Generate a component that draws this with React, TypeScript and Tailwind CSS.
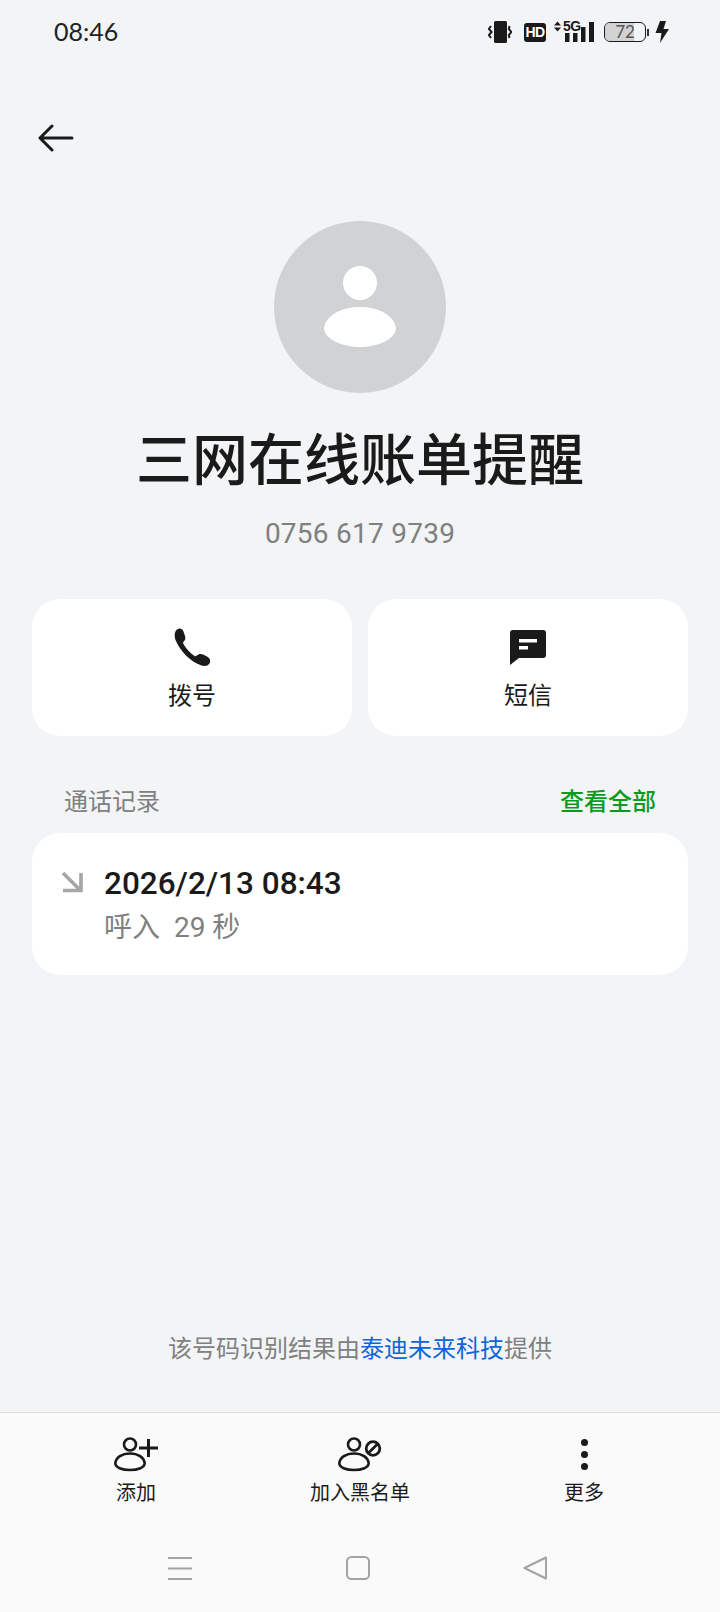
import React from 'react';

const cjk = 'font-["Roboto","Noto_Sans_CJK_SC",sans-serif]';

const StatusIcons = () => (
  <div className="flex items-center">
    {/* vibrate */}
    <svg width="24" height="24" viewBox="0 0 24 24" className="text-[#1a1a1a] mr-[12px]">
      <rect x="6" y="1" width="13" height="22" rx="1.5" fill="currentColor" />
      <path d="M3 6 L0.8 9 L3.6 12 L0.8 15 L3 18" stroke="currentColor" strokeWidth="2" fill="none" />
      <path d="M21.5 6 L20.8 9 L23.4 12 L20.8 15 L21.5 18" stroke="currentColor" strokeWidth="2" fill="none" />
    </svg>
    <div className="w-[22px] h-[19px] rounded-[3px] bg-[#1a1a1a] text-white text-[14px] leading-[19px] font-bold text-center tracking-[-0.5px] font-['Liberation_Sans',sans-serif] mr-[8px]">HD</div>
    {/* signal with 5G */}
    <div className="relative w-[41px] h-[24px] mr-[9px]">
      <svg width="41" height="24" viewBox="0 0 41 24" className="absolute left-0 top-0 text-[#1a1a1a]">
        <path d="M0 5.5 L3.5 1.5 L7 5.5 Z M0 7.5 L7 7.5 L3.5 11.5 Z" fill="currentColor" />
        <rect x="11" y="13" width="4.5" height="9" fill="currentColor" />
        <rect x="19" y="13" width="4.5" height="9" fill="currentColor" />
        <rect x="27" y="7" width="4.5" height="15" fill="currentColor" />
        <rect x="35" y="2" width="5" height="20" fill="currentColor" />
      </svg>
      <span className="absolute left-[9px] top-[0px] text-[14px] leading-[13px] font-bold text-[#1a1a1a] tracking-[-0.5px] font-['Liberation_Sans',sans-serif]">5G</span>
    </div>
    {/* battery */}
    <div className="relative w-[42px] h-[20px] rounded-[6px] border-[1.5px] border-[#1a1a1a] overflow-hidden">
      <div className="absolute left-0 top-0 h-full w-[29px] bg-[#d2d2d2]" />
      <span className="absolute inset-0 text-center text-[17px] leading-[17px] text-[#555] font-['Lato',sans-serif]">72</span>
    </div>
    <div className="w-[2px] h-[7px] bg-[#333] ml-[1px] mr-[6px]" />
    <svg width="14" height="22" viewBox="0 0 14 22" className="text-[#1a1a1a]">
      <path d="M5 0 H11 L8.5 8 H14 L5 22 L6.5 12 H0.5 Z" fill="currentColor" />
    </svg>
  </div>
);

const PersonOutline = () => (
  <>
    <circle cx="16" cy="7.5" r="6" fill="none" stroke="#1a1a1a" strokeWidth="2.6" />
    <path d="M1.3 26 C2 20.5 8 16.5 16 16.5 C24 16.5 30 20.5 30.7 26 C30.7 30.5 24 33 16 33 C8 33 1.3 30.5 1.3 26 Z" fill="none" stroke="#1a1a1a" strokeWidth="2.6" />
  </>
);

const ToolbarItem = ({ icon, label }: { icon: React.ReactNode; label: string }) => (
  <div className="flex flex-col items-center w-[160px]">
    <div className="h-[38px] flex items-center justify-center">{icon}</div>
    <span className="mt-[7px] text-[20px] leading-[26px] text-[#1a1a1a]">{label}</span>
  </div>
);

export default function App() {
  return (
    <div className={`w-[720px] h-[1612px] bg-[#f2f4f6] flex flex-col ${cjk}`}>
      {/* Status bar */}
      <div className="h-[64px] flex items-center justify-between pl-[54px] pr-[51px]">
        <span className="text-[25px] text-[#222] font-['Lato',sans-serif]">08:46</span>
        <StatusIcons />
      </div>

      {/* Back */}
      <div className="pl-[38px] pt-[60px] h-[157px]">
        <svg width="36" height="28" viewBox="0 0 36 28" fill="none" stroke="#1a1a1a" strokeWidth="3" strokeLinecap="round" strokeLinejoin="round">
          <path d="M2 14 H34 M14 2 L2 14 L14 26" />
        </svg>
      </div>

      {/* Contact */}
      <div className="flex flex-col items-center">
        <div className="w-[172px] h-[172px] rounded-full bg-[#d1d2d4] flex items-center justify-center">
          <svg width="72" height="82" viewBox="0 0 72 82" fill="#fff">
            <circle cx="36" cy="17" r="17" />
            <path d="M0 62 C2 49 18 41 36 41 C54 41 70 49 72 62 C72 73 54 81 36 81 C18 81 0 73 0 62 Z" />
          </svg>
        </div>
        <h1 className="mt-[35px] text-[56px] leading-[66px] font-medium text-[#1a1a1a]">三网在线账单提醒</h1>
        <div className="mt-[22px] text-[28px] leading-[36px] tracking-[0.25px] text-[#808080]">0756 617 9739</div>
      </div>

      {/* Actions */}
      <div className="mt-[47px] px-[32px] flex gap-[16px]">
        <div className="flex-1 h-[137px] bg-white rounded-[28px] flex flex-col items-center pt-[29px]">
          <svg width="38" height="38" viewBox="0 0 38 38">
            <path d="M4 1.5 C6.5 -0.5 9.5 0.5 10.5 3.5 L12 8 C12.8 10.5 12.3 12 10.3 14 C10 14.5 10 15 10.3 15.8 C13 20.5 17 25 21.5 28 C22.3 28.4 23 28.3 23.5 27.8 C25.5 26 27.5 25.5 30 26.5 L34 28.5 C37 30 38 33 36.5 35.5 C35 38 31.5 38.5 28.5 37.5 C17 33.5 7 23 2.5 12 C1 8 1.5 3.5 4 1.5 Z" fill="#1a1a1a" />
          </svg>
          <span className="mt-[14px] text-[24px] leading-[32px] text-[#1a1a1a]">拨号</span>
        </div>
        <div className="flex-1 h-[137px] bg-white rounded-[28px] flex flex-col items-center pt-[29px]">
          <svg width="38" height="38" viewBox="0 0 38 38">
            <path d="M4 2 H34 A3 3 0 0 1 37 5 V27 A3 3 0 0 1 34 30 H10 L1 37 V5 A3 3 0 0 1 4 2 Z" fill="#1a1a1a" />
            <rect x="10" y="11" width="18" height="3.5" fill="#fff" />
            <rect x="10" y="18" width="9" height="3.5" fill="#fff" />
          </svg>
          <span className="mt-[14px] text-[24px] leading-[32px] text-[#1a1a1a]">短信</span>
        </div>
      </div>

      {/* Call log header */}
      <div className="mt-[50px] px-[64px] flex items-center justify-between h-[32px]">
        <span className="text-[24px] leading-[32px] text-[#808080]">通话记录</span>
        <span className="text-[24px] leading-[32px] font-medium text-[#0a9a1e]">查看全部</span>
      </div>

      {/* Call log card */}
      <div className="mt-[15px] mx-[32px] h-[142px] bg-white rounded-[28px] flex pl-[29px] pt-[30px]">
        <svg width="22" height="22" viewBox="0 0 22 22" fill="none" stroke="#a6a6a6" strokeWidth="3.6" className="mt-[8px]">
          <path d="M2 2 L19 19 M2 19.5 H20 V2" />
        </svg>
        <div className="ml-[21px]">
          <div className="text-[31.5px] leading-[42px] font-medium text-[#1a1a1a]">2026/2/13 08:43</div>
          <div className="mt-[2px] text-[28px] leading-[42px] text-[#808080] whitespace-pre">呼入  29 秒</div>
        </div>
      </div>

      {/* Attribution */}
      <div className="flex-1 flex items-end justify-center pb-[47px]">
        <p className="text-[24px] leading-[32px] text-[#808080]">
          该号码识别结果由<span className="text-[#0f66d9]">泰迪未来科技</span>提供
        </p>
      </div>

      {/* Bottom toolbar */}
      <div className="h-[200px] bg-[#fafafa] border-t border-[#dcdcdc] flex flex-col">
        <div className="flex justify-between pl-[56px] pr-[56px] pt-[22px]">
          <ToolbarItem
            label="添加"
            icon={
              <svg width="44" height="35" viewBox="0 0 44 35">
                <PersonOutline />
                <path d="M25 11 H44 M34.5 2 V20" stroke="#1a1a1a" strokeWidth="3" />
              </svg>
            }
          />
          <ToolbarItem
            label="加入黑名单"
            icon={
              <svg width="44" height="35" viewBox="0 0 44 35">
                <PersonOutline />
                <circle cx="35" cy="11.5" r="6.8" fill="none" stroke="#1a1a1a" strokeWidth="2.8" />
                <path d="M30.2 16.3 L39.8 6.7" stroke="#1a1a1a" strokeWidth="2.8" />
              </svg>
            }
          />
          <ToolbarItem
            label="更多"
            icon={
              <div className="flex flex-col gap-[5px]">
                <div className="w-[7px] h-[7px] rounded-full bg-[#1a1a1a]" />
                <div className="w-[7px] h-[7px] rounded-full bg-[#1a1a1a]" />
                <div className="w-[7px] h-[7px] rounded-full bg-[#1a1a1a]" />
              </div>
            }
          />
        </div>

        {/* Nav bar */}
        <div className="mt-[50px] flex items-center justify-between pl-[167px] pr-[173px]">
          <svg width="26" height="24" viewBox="0 0 26 24" stroke="#a3a3a3" strokeWidth="2">
            <path d="M1 2 H25 M1 12.5 H25 M1 23 H25" />
          </svg>
          <svg width="24" height="24" viewBox="0 0 24 24" fill="none" stroke="#a3a3a3" strokeWidth="2">
            <rect x="1" y="1" width="22" height="22" rx="4.5" />
          </svg>
          <svg width="24" height="24" viewBox="0 0 24 24" fill="none" stroke="#a3a3a3" strokeWidth="2" strokeLinejoin="round">
            <path d="M23 1.5 V22.5 L1.5 12 Z" />
          </svg>
        </div>
      </div>
    </div>
  );
}
